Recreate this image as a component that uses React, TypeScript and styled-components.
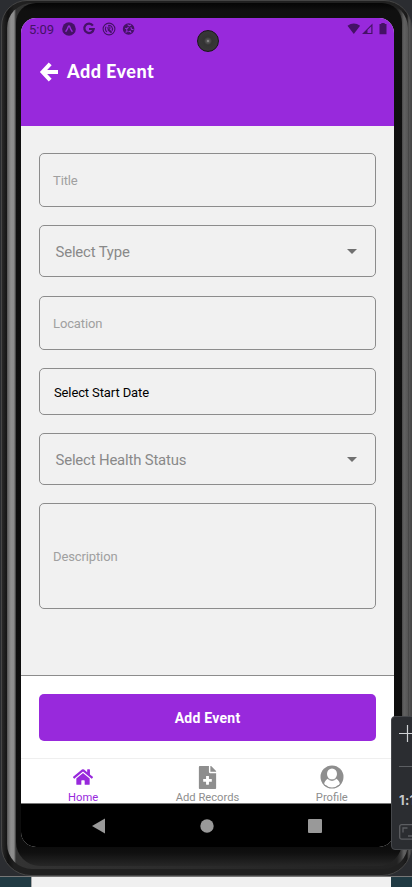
import React from "react";
import styled, { createGlobalStyle } from "styled-components";
import { FaFileMedical, FaHome } from "react-icons/fa";

const GlobalStyle = createGlobalStyle`
  * { box-sizing: border-box; }
  body { margin: 0; background: #2b2d31; font-family: Roboto, "Liberation Sans", sans-serif; overflow: hidden; }
`;

const Desktop = styled.div`
  position: relative;
  width: 412px;
  height: 887px;
  overflow: hidden;
  display: flex;
  flex-direction: column;
  background: #2b2d31;
`;

const Shell = styled.div`
  width: 411px;
  height: 876px;
  flex: none;
  margin-left: 1px;
  padding: 2px 3px 6px 5px;
  border-radius: 26px 28px 30px 30px;
  border: 1px solid #454545;
  background: linear-gradient(90deg, #2a2a2a 0, #1c1c1c 3px, #111 6px, #202020 12px, #202020 400px, #171717 405px, #585858 407px, #333 411px);
`;

const Rim = styled.div`
  height: 100%;
  padding: 0 6px 3px 9px;
  border-radius: 25px;
  background: linear-gradient(90deg, #555 0, #777 2px, #8f8f8f 4px, #8b8b8b 7px, #333 9px, #222 390px, #3b3b3b 394px, #626262 397px, #555 401px);
`;

const Bezel = styled.div`
  height: 100%;
  padding: 15px 6px 0 5px;
  border-radius: 20px 20px 24px 24px;
  background: linear-gradient(180deg, #050505 0, #101010 8px, #0d0d0d 845px, #101010 850px, #272727 100%);
`;

const Screen = styled.div`
  position: relative;
  width: 373px;
  height: 829px;
  border-radius: 15px;
  overflow: hidden;
  background: #f1f1f1;
  display: flex;
  flex-direction: column;
`;

const Header = styled.header`
  height: 108px;
  flex: none;
  background: #9829dc;
  color: #fff;
`;

const StatusBar = styled.div`
  height: 22px;
  padding: 0 7px 0 8px;
  display: flex;
  align-items: center;
  color: #451266;
  font-size: 13px;
`;

const Clock = styled.span`
  width: 33px;
  line-height: 24px;
  padding-top: 2px;
`;

const Notices = styled.div`
  display: flex;
  gap: 6px;
  flex: 1;
  svg { display: block; }
`;

const Signals = styled.div`
  display: flex;
  align-items: center;
`;

const Camera = styled.div`
  position: absolute;
  left: 176px;
  top: 12px;
  width: 22px;
  height: 22px;
  border-radius: 50%;
  border: 1px solid #171717;
  background: radial-gradient(circle at 50% 50%, #aaa 0, #555 1.5px, #333 4px, #383838 10px);
`;

const TitleRow = styled.div`
  height: 40px;
  margin-top: 12px;
  padding-left: 18px;
  display: flex;
  align-items: center;
  gap: 8px;
`;

const PageTitle = styled.h1`
  margin: 0;
  padding-bottom: 2px;
  font: 900 18px/24px Lato, "Liberation Sans", sans-serif;
  letter-spacing: 0.45px;
`;

const Form = styled.main`
  height: 549px;
  flex: none;
  padding: 27px 18px 0;
  display: flex;
  flex-direction: column;
`;

const Field = styled.div<{ $height: number; $gap: number; $large?: boolean; $filled?: boolean }>`
  height: ${(p) => p.$height}px;
  margin-bottom: ${(p) => p.$gap}px;
  flex: none;
  border: 1px solid #8c8c8c;
  border-radius: 5px;
  padding: ${(p) => (p.$large || p.$filled ? 2 : 0)}px 18px 0 ${(p) => (p.$large ? 15.5 : p.$filled ? 14 : 13)}px;
  display: flex;
  align-items: center;
  justify-content: space-between;
  color: ${(p) => (p.$filled ? "#000" : p.$large ? "#898989" : "#a0a0a0")};
  font-size: ${(p) => (p.$large ? 14.9 : 13)}px;
  letter-spacing: ${(p) => (p.$large ? -0.17 : -0.12)}px;
`;

const Caret = styled.span`
  border: 5px solid transparent;
  border-top-color: #707070;
  border-bottom: 0;
  margin-top: -2px;
`;

const Footer = styled.div`
  height: 83px;
  flex: none;
  padding: 18px 18px 0;
  border-top: 1px solid #8c8c8c;
  background: #fff;
`;

const Submit = styled.button`
  display: block;
  width: 100%;
  height: 47px;
  border: 0;
  border-radius: 5px;
  padding: 1px 0 0;
  background: #9829dc;
  color: #fff;
  font: 700 14px Roboto, sans-serif;
  letter-spacing: 0.25px;
`;

const Tabs = styled.nav`
  height: 46px;
  flex: none;
  display: grid;
  grid-template-columns: repeat(3, 1fr);
  border-top: 1px solid #efefef;
  border-bottom: 1px solid #777;
  background: #fff;
`;

const Tab = styled.div<{ $active?: boolean }>`
  display: flex;
  flex-direction: column;
  align-items: center;
  color: ${(p) => (p.$active ? "#9829dc" : "#8e8e8e")};
  font-size: 11.2px;
  line-height: 13px;
`;

const TabIcon = styled.span`
  height: 32px;
  flex: none;
  display: flex;
  align-items: center;
  padding-top: 4px;
`;

const SystemBar = styled.div`
  flex: 1;
  padding: 0 72px 0 71px;
  display: flex;
  align-items: center;
  justify-content: space-between;
  background: #000;
`;

const Strip = styled.div`
  height: 11px;
  flex: none;
  padding: 0 21px 0 31px;
  border-top: 1px solid #777;
  background: #203a43;
`;

const StripPanel = styled.div`
  height: 100%;
  background: #f0f0f0;
  border-left: 1px solid #aaa;
`;

const ZoomPanel = styled.aside`
  position: absolute;
  left: 391px;
  top: 716px;
  width: 40px;
  height: 134px;
  border: 1px solid #45474b;
  border-radius: 4px;
  background: #2b2d31;
  padding: 8px 0 0 7px;
  color: #c5c7ca;
`;

const PanelDivider = styled.div`
  width: 30px;
  height: 1px;
  margin: 24px 0 23px;
  background: #5c5e62;
`;

const Ratio = styled.div`
  height: 20px;
  font: 700 13px/20px Inter, sans-serif;
  letter-spacing: 0.3px;
  margin-bottom: 14px;
`;

const BackIcon = () => (
  <svg width="20" height="20" viewBox="0 0 20 20" fill="none" stroke="#fff" strokeWidth="4">
    <path d="M11.2 1.9 3.6 10l7.6 8.1M4 10h15" strokeLinejoin="miter" />
  </svg>
);

const ExpoIcon = () => (
  <svg width="14" height="14" viewBox="0 0 14 14">
    <circle cx="7" cy="7" r="6.8" fill="#451266" />
    <path d="M3.6 9.8C4.8 8.5 5.7 6.3 6.4 4.4Q7 3.6 7.6 4.4C8.3 6.3 9.2 8.5 10.4 9.8" fill="none" stroke="#9829dc" strokeWidth="1.4" />
  </svg>
);

const GoogleIcon = () => (
  <svg width="14" height="14" viewBox="0 0 14 14" fill="none" stroke="#451266" strokeWidth="2.2">
    <path d="M10.9 3.6A4.7 4.7 0 1 0 11.7 7H7" />
  </svg>
);

const SwirlIcon = () => (
  <svg width="14" height="14" viewBox="0 0 14 14" fill="none" stroke="#451266">
    <circle cx="7" cy="7" r="5.9" strokeWidth="1.1" />
    <path d="M5 9.9A3.6 3.6 0 0 1 4.2 4.6M6.2 3.5A3.6 3.6 0 0 1 10 8.8" strokeWidth="1.1" />
    <path d="M6 7.2 9.6 10.6" strokeWidth="1.9" />
    <circle cx="6.9" cy="6" r="1.2" strokeWidth="1" />
  </svg>
);

const BallIcon = () => (
  <svg width="14" height="14" viewBox="0 0 14 14">
    <circle cx="6.6" cy="7" r="5.8" fill="#451266" />
    <path d="m5.6 2.6 1.7 1.2 1.8-.9M3.2 6.2l1.6.7 1.7-1.7M8.8 5.2l.7 2 2 .4M4.7 7.5l.4 2.2-1.6.6M6.4 9.8l2-.6.6 1.7" fill="none" stroke="#9829dc" strokeWidth="1.1" />
  </svg>
);

const SignalIcons = () => (
  <svg width="40" height="14" viewBox="0 0 40 14" fill="#451266">
    <path d="M.5 3.8Q6.8-.8 13.1 3.8L6.8 12z" />
    <path d="M15 12 25.5 1.5V12zm5.5-1.1h3.8V4.3l-3.8 3.8z" fillRule="evenodd" />
    <path d="M32.5 2h1.8V.9h3.4V2h1.8v10.2h-7z" />
  </svg>
);

const ProfileIcon = () => (
  <svg width="24" height="24" viewBox="0 0 24 24" fill="none">
    <clipPath id="profile-disc"><circle cx="12" cy="12" r="10.4" /></clipPath>
    <circle cx="12" cy="12" r="11.5" fill="#8e8e8e" />
    <g clipPath="url(#profile-disc)">
      <path d="M3.5 23Q3.5 16 8.1 13.6Q12 16.9 15.9 13.6Q20.5 16 20.5 23z" fill="#fff" />
      <ellipse cx="12" cy="9" rx="5" ry="5.5" fill="#fff" />
    </g>
    <path d="M7.6 13.4Q12 17.4 16.4 13.4" stroke="#8e8e8e" strokeWidth="1" />
  </svg>
);

export default function App() {
  return (
    <>
      <GlobalStyle />
      <Desktop>
        <Shell>
          <Rim>
            <Bezel>
              <Screen>
                <Header>
                  <StatusBar>
                    <Clock>5:09</Clock>
                    <Notices>
                      <ExpoIcon />
                      <GoogleIcon />
                      <SwirlIcon />
                      <BallIcon />
                    </Notices>
                    <Signals><SignalIcons /></Signals>
                  </StatusBar>
                  <TitleRow>
                    <BackIcon />
                    <PageTitle>Add Event</PageTitle>
                  </TitleRow>
                </Header>
                <Form>
                  <Field $height={54} $gap={18}>Title</Field>
                  <Field $height={52} $gap={19} $large>Select Type<Caret /></Field>
                  <Field $height={54} $gap={18}>Location</Field>
                  <Field $height={47} $gap={18} $filled>Select Start Date</Field>
                  <Field $height={52} $gap={18} $large>Select Health Status<Caret /></Field>
                  <Field $height={106} $gap={0}>Description</Field>
                </Form>
                <Footer><Submit>Add Event</Submit></Footer>
                <Tabs>
                  <Tab $active><TabIcon><FaHome size={20} /></TabIcon>Home</Tab>
                  <Tab><TabIcon><FaFileMedical size={23} /></TabIcon>Add Records</Tab>
                  <Tab><TabIcon><ProfileIcon /></TabIcon>Profile</Tab>
                </Tabs>
                <SystemBar>
                  <svg width="14" height="16" viewBox="0 0 14 16"><path d="M13 .5v15L0 8z" fill="#999" /></svg>
                  <svg width="14" height="14" viewBox="0 0 14 14"><circle cx="7" cy="7" r="6.7" fill="#999" /></svg>
                  <svg width="14" height="14" viewBox="0 0 14 14"><rect width="14" height="14" rx="1" fill="#999" /></svg>
                </SystemBar>
                <Camera />
              </Screen>
            </Bezel>
          </Rim>
        </Shell>
        <Strip><StripPanel /></Strip>
        <ZoomPanel>
          <svg width="17" height="17" viewBox="0 0 17 17" display="block"><path d="M0 8.5h17M8.5 0v17" stroke="#d0d2d5" strokeWidth="1.2" /></svg>
          <PanelDivider />
          <Ratio>1:1</Ratio>
          <svg width="24" height="16" viewBox="0 0 24 16" fill="none" stroke="#5c5e62" display="block">
            <rect x=".7" y=".7" width="22" height="14.5" rx="2" strokeWidth="1.3" />
            <path d="M4 8.5V4h4.5M9 12h5V8" strokeWidth="1.3" />
          </svg>
        </ZoomPanel>
      </Desktop>
    </>
  );
}
